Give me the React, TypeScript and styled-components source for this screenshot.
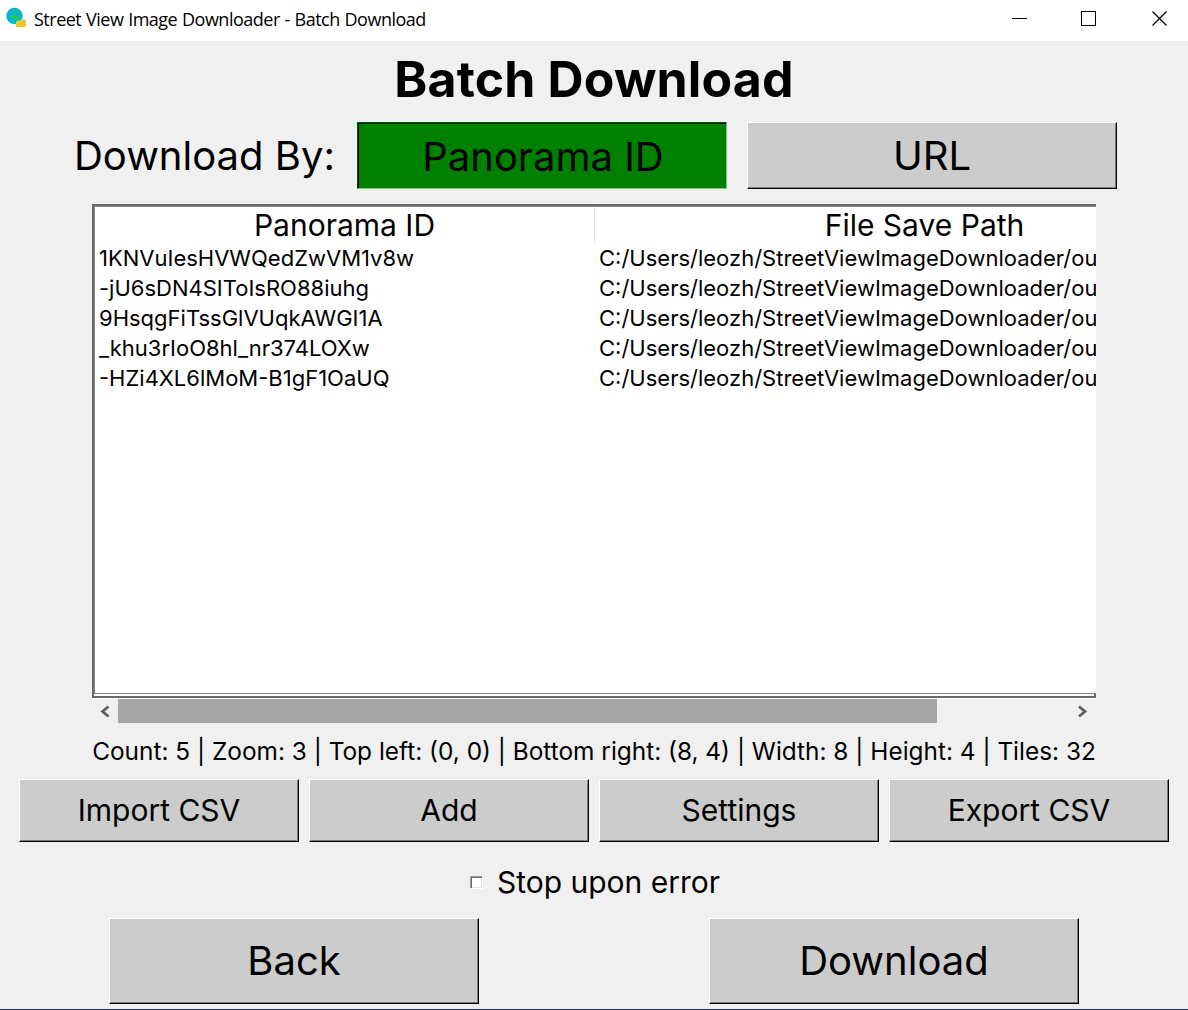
import React from "react";
import styled, { createGlobalStyle, css } from "styled-components";

const GlobalStyle = createGlobalStyle`
  * { box-sizing: border-box; }
  body { margin: 0; background: #f0f0f0; }
`;

const Window = styled.div`
  width: 1188px;
  height: 1010px;
  display: flex;
  flex-direction: column;
  align-items: center;
  overflow: hidden;
  background: #f0f0f0;
  border-bottom: 1px solid #22495a;
  color: #000;
  font-family: Inter, "Liberation Sans", sans-serif;
  font-optical-sizing: none;
  font-weight: 400;
  white-space: nowrap;
`;

const TitleBar = styled.header`
  width: 100%;
  height: 41px;
  flex: none;
  display: flex;
  align-items: center;
  background: #fff;
`;

const AppIcon = styled.svg`
  width: 22px;
  height: 24px;
  margin: 0 7px 4px 5px;
  flex: none;
`;

const WindowTitle = styled.span`
  flex: 1;
  font: 18px/24px "Open Sans", "Noto Sans", sans-serif;
  letter-spacing: -0.5px;
  word-spacing: 0.6px;
  padding-bottom: 3px;
`;

const WindowControls = styled.svg`
  width: 160px;
  height: 41px;
  flex: none;
`;

const Heading = styled.h1`
  margin: 8px 0 12px;
  font-size: 50px;
  line-height: 61px;
  font-weight: 700;
  letter-spacing: 0.15px;
`;

const ModeRow = styled.div`
  width: 1043px;
  margin-left: 3px;
  display: flex;
  align-items: center;
  gap: 20px;
`;

const ModeLabel = styled.span`
  flex: 1;
  font-size: 40px;
  line-height: 67px;
`;

const raised = css`
  background: #ccc;
  border-color: #fff #000 #000 #fff;
  box-shadow: inset -1px -1px 0 #7a7a7a;
`;

const sunken = css`
  background: #008000;
  border-color: #005000 #7fc97f #7fc97f #005000;
  box-shadow: inset 1px 1px 0 #000;
  padding: 2px 0 0 2px;
`;

const Button = styled.button<{ $w: number; $h: number; $size: number; $lift?: number; $active?: boolean }>`
  width: ${(p) => p.$w}px;
  height: ${(p) => p.$h}px;
  flex: none;
  padding: 0 0 ${(p) => p.$lift ?? 0}px;
  border: 1px solid;
  border-radius: 0;
  font: inherit;
  font-size: ${(p) => p.$size}px;
  color: #000;
  ${(p) => (p.$active ? sunken : raised)}
`;

const TableFrame = styled.div`
  width: 1004px;
  height: 494px;
  margin-top: 15px;
  flex: none;
  overflow: hidden;
  border: 2px solid #696969;
  border-right: 0;
  background: #fff;
  box-shadow: inset 1px 1px 0 #828790;
`;

const TableBody = styled.div`
  height: 488px;
  padding-left: 1px;
  padding-top: 1px;
  border-bottom: 1px solid #828790;
`;

const FrameCorner = styled.div`
  height: 2px;
  border-right: 2px solid #696969;
  background: #fff;
`;

const Columns = styled.div`
  display: grid;
  grid-template-columns: 500px 660px;
`;

const HeaderCell = styled.div`
  height: 36px;
  font-size: 30px;
  line-height: 36px;
  text-align: center;
  border-right: 1px solid #e5e5e5;
`;

const Cell = styled.div`
  height: 30px;
  padding-left: 4px;
  font-size: 22px;
  line-height: 31px;
`;

const ScrollBar = styled.div`
  width: 1004px;
  height: 26px;
  flex: none;
  display: flex;
  align-items: flex-start;
  border-top: 1px solid #fff;
`;

const ScrollArrow = styled.svg`
  width: 26px;
  height: 24px;
`;

const ScrollTrack = styled.div`
  flex: 1;
  height: 24px;
`;

const ScrollThumb = styled.div`
  width: 819px;
  height: 24px;
  background: #a6a6a6;
`;

const Status = styled.div`
  margin-top: 12px;
  font-size: 24.4px;
  line-height: 30px;
`;

const Actions = styled.div`
  display: flex;
  gap: 10px;
  margin-top: 13px;
`;

const CheckRow = styled.label`
  display: flex;
  align-items: center;
  gap: 14px;
  margin: 22px 0 0 2px;
  font-size: 30px;
  line-height: 36px;
`;

const CheckBox = styled.span`
  width: 13px;
  height: 13px;
  background: #fff;
  border: 1px solid;
  border-color: #a0a0a0 #fff #fff #a0a0a0;
  box-shadow: inset 1px 1px 0 #696969, inset -1px -1px 0 #e3e3e3;
`;

const Footer = styled.div`
  display: flex;
  gap: 230px;
  margin-top: 18px;
`;

const ids = [
  "1KNVuIesHVWQedZwVM1v8w",
  "-jU6sDN4SIToIsRO88iuhg",
  "9HsqgFiTssGlVUqkAWGI1A",
  "_khu3rIoO8hl_nr374LOXw",
  "-HZi4XL6lMoM-B1gF1OaUQ",
];
const savePath = "C:/Users/leozh/StreetViewImageDownloader/output";

export default function App() {
  return (
    <Window>
      <GlobalStyle />
      <TitleBar>
        <AppIcon viewBox="0 0 22 24">
          <circle cx="9.5" cy="9" r="8.2" fill="#08aee8" />
          <path d="M6 3.500l4-1 1 1-4 2zM11.500 3l3 1.500 1 2.500-3-1zM5.500 8.500l5-2 1 4-1 2-5-2zM12.500 9l3 .5-1 3-3 1zM5 12.500l4 1.500-1 1.500-2-1z" fill="#10d050" />
          <path d="M12 13.500h2.500l1-1H20q1 0 1 1V19q0 1-1 1h-8q-1 0-1-1v-4.500z" fill="#e2cb31" />
        </AppIcon>
        <WindowTitle>Street View Image Downloader - Batch Download</WindowTitle>
        <WindowControls viewBox="1028 0 160 41" overflow="visible" fill="none" stroke="#000" shapeRendering="crispEdges">
          <path d="M1012 18.500h15M1081.500 11.500h14v14h-14z" />
          <path d="M1152.500 11.500l14 14M1166.500 11.500l-14 14" shapeRendering="auto" strokeWidth="1.200" />
        </WindowControls>
      </TitleBar>
      <Heading>Batch Download</Heading>
      <ModeRow>
        <ModeLabel>Download By:</ModeLabel>
        <Button $w={370} $h={67} $size={40} $active>Panorama ID</Button>
        <Button $w={370} $h={67} $size={40}>URL</Button>
      </ModeRow>
      <TableFrame>
        <TableBody>
          <Columns>
            <HeaderCell>Panorama ID</HeaderCell>
            <HeaderCell>File Save Path</HeaderCell>
            {ids.map((id) => (
              <React.Fragment key={id}>
                <Cell>{id}</Cell>
                <Cell>{savePath}</Cell>
              </React.Fragment>
            ))}
          </Columns>
        </TableBody>
        <FrameCorner />
      </TableFrame>
      <ScrollBar>
        <ScrollArrow viewBox="0 0 26 24" fill="none" stroke="#606060" strokeWidth="2.800">
          <path d="M16.500 7.500l-6 5 6 5" />
        </ScrollArrow>
        <ScrollTrack><ScrollThumb /></ScrollTrack>
        <ScrollArrow viewBox="0 0 26 24" fill="none" stroke="#606060" strokeWidth="2.800">
          <path d="M9 7.500l6 5-6 5" />
        </ScrollArrow>
      </ScrollBar>
      <Status>Count: 5 | Zoom: 3 | Top left: (0, 0) | Bottom right: (8, 4) | Width: 8 | Height: 4 | Tiles: 32</Status>
      <Actions>
        {["Import CSV", "Add", "Settings", "Export CSV"].map((t) => (
          <Button key={t} $w={280} $h={63} $size={30} $lift={2}>{t}</Button>
        ))}
      </Actions>
      <CheckRow><CheckBox />Stop upon error</CheckRow>
      <Footer>
        <Button $w={370} $h={86} $size={40} $lift={2}>Back</Button>
        <Button $w={370} $h={86} $size={40} $lift={2}>Download</Button>
      </Footer>
    </Window>
  );
}
